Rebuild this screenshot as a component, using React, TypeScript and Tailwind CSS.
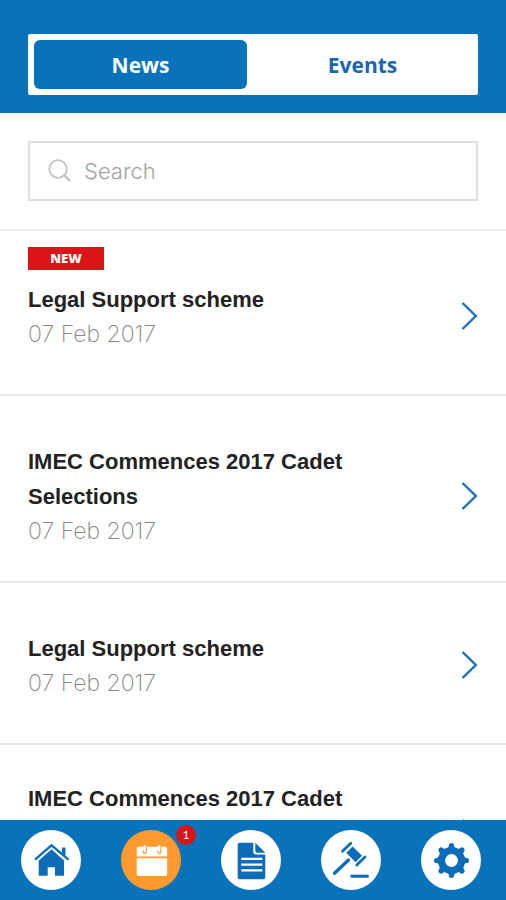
import React from 'react'
import clsx from 'clsx'

const articles = [
  { id: 1, title: 'Legal Support scheme', date: '07 Feb 2017', isNew: true, spacing: 'pt-4 pb-[42px]' },
  { id: 2, title: 'IMEC Commences 2017 Cadet Selections', date: '07 Feb 2017', isNew: false, spacing: 'pt-12 pb-8' },
  { id: 3, title: 'Legal Support scheme', date: '07 Feb 2017', isNew: false, spacing: 'pt-12 pb-[42px]' },
  { id: 4, title: 'IMEC Commences 2017 Cadet Selections', date: '07 Feb 2017', isNew: false, spacing: 'pt-9 pb-8' },
]

const navItems = [
  { id: 'home', label: 'Home', icon: <HomeIcon />, count: 0 },
  { id: 'news', label: 'News and events', icon: <CalendarIcon />, count: 1 },
  { id: 'documents', label: 'Documents', icon: <DocumentIcon />, count: 0 },
  { id: 'legal', label: 'Legal', icon: <GavelIcon />, count: 0 },
  { id: 'settings', label: 'Settings', icon: <GearIcon />, count: 0 },
]

const tabs = [
  { name: 'News', width: 'w-[48%]' },
  { name: 'Events', width: 'flex-1' },
]

export default function App() {
  const [tab, setTab] = React.useState('News')
  const [query, setQuery] = React.useState('')

  const visible = articles.filter((a) => a.title.toLowerCase().includes(query.toLowerCase()))

  function renderTabs() {
    return (
      <header className="bg-[#0872ba] px-7 pt-[34px] pb-[18px]">
        <div role="tablist" className="flex rounded-xs bg-white py-[6px] pl-[6px]">
          {tabs.map(({ name, width }) => (
            <button
              key={name}
              type="button"
              role="tab"
              aria-selected={tab === name}
              onClick={() => setTab(name)}
              className={clsx(
                "h-[49px] rounded-md pt-[2px] font-['Open_Sans',sans-serif] text-[21px] font-bold",
                width,
                tab === name ? 'bg-[#0872ba] text-white' : 'text-[#1a67b0]'
              )}
            >
              {name}
            </button>
          ))}
        </div>
      </header>
    )
  }

  function renderSearch() {
    return (
      <div className="border-b-2 border-[#ececec] p-7">
        <label className="flex h-[60px] items-center gap-3 border-2 border-[#dedede] px-[18px]">
          <SearchIcon />
          <input
            type="text"
            aria-label="Search"
            placeholder="Search"
            value={query}
            onChange={(e) => setQuery(e.target.value)}
            className="min-w-0 flex-1 font-['Inter','Liberation_Sans',sans-serif] text-[22px] font-light text-neutral-700 outline-none placeholder:text-[#a3a3a3]"
          />
        </label>
      </div>
    )
  }

  return (
    <div className="flex h-screen flex-col bg-white font-['Liberation_Sans',Arial,sans-serif]">
      {renderTabs()}
      <main className="min-h-0 flex-1 overflow-y-auto [scrollbar-width:none]">
        {renderSearch()}
        <ul>
          {visible.map((a) => (
            <Article key={a.id} {...a} />
          ))}
        </ul>
      </main>
      <BottomNav />
    </div>
  )
}

function Article(props) {
  return (
    <li className={clsx('border-b-2 border-[#e9e9e9] px-7', props.spacing)}>
      {props.isNew && (
        <span className="mb-3 flex h-[23px] w-[76px] items-center justify-center bg-[#dc1418] font-['Open_Sans',sans-serif] text-[13px] font-extrabold text-white">
          NEW
        </span>
      )}
      <a href="#article" className="flex items-center justify-between">
        <div className="max-w-[340px]">
          <h2 className="text-[22px] leading-[35px] font-bold text-[#222]">{props.title}</h2>
          <p className="font-['Inter','Liberation_Sans',sans-serif] text-[23px] leading-[35px] font-extralight text-[#858585]">
            {props.date}
          </p>
        </div>
        <svg viewBox="0 0 18 30" className="mb-[2px] h-[30px] w-[18px]" fill="none" stroke="#1a6fb8" strokeWidth="2.400">
          <path d="M2.500 2 15.800 15 2.500 28" />
        </svg>
      </a>
    </li>
  )
}

function BottomNav() {
  return (
    <nav className="flex h-20 shrink-0 items-center justify-between bg-[#0872ba] pr-[25px] pl-[21px]">
      {navItems.map((item) => (
        <button
          key={item.id}
          type="button"
          aria-label={item.label}
          className={clsx(
            'relative size-[60px] rounded-full',
            item.id === 'news' ? 'bg-[#ff9a2e] text-white' : 'bg-white text-[#0d6cb8]'
          )}
        >
          {item.icon}
          {item.count > 0 && (
            <span className="absolute -top-[5px] -right-[15px] flex size-5 items-center justify-center rounded-full bg-[#dc1418] font-['Lato',sans-serif] text-xs text-white">
              {item.count}
            </span>
          )}
        </button>
      ))}
    </nav>
  )
}

function SearchIcon() {
  return (
    <svg viewBox="0 0 24 24" className="size-6" fill="none" stroke="#c2c2c2" strokeWidth="1.800">
      <circle cx="10" cy="10" r="8.800" />
      <path d="M16.500 16.500l5.500 5.500" strokeWidth="2.400" />
    </svg>
  )
}

function HomeIcon() {
  return (
    <svg viewBox="0 0 60 60" className="size-full" fill="currentColor">
      <path d="M30.500 19.200 43 30.500V45.700H34V37.300H26.700V45.700H17.700V30.500Z" />
      <path d="M41 17.500H44.500V26L41 23Z" />
      <path d="M14 29.700 30.500 15.300 47.500 29.700" fill="none" stroke="currentColor" strokeWidth="2.400" />
    </svg>
  )
}

function CalendarIcon() {
  return (
    <svg viewBox="0 0 60 60" className="size-full" fill="currentColor">
      <path d="M17.700 16.700H44.200a2 2 0 0 1 2 2V26.600H15.700V18.700a2 2 0 0 1 2-2Z" />
      <path d="M15.700 28.200H46.200V44a2 2 0 0 1-2 2H17.700a2 2 0 0 1-2-2Z" />
      <g fill="none" stroke="#ff9a2e" strokeWidth="1.200">
        <path d="M25.200 17v3.800a1.700 1.700 0 1 1-2.600-.4M39.800 17v3.800a1.700 1.700 0 1 1-2.600-.4" />
      </g>
      <path d="M22.800 15h1.800v5.500h-1.800ZM37.400 15h1.800v5.500h-1.800Z" />
    </svg>
  )
}

function DocumentIcon() {
  return (
    <svg viewBox="0 0 60 60" className="size-full" fill="currentColor">
      <path d="M18.700 12.700H32.300V21.500a3 3 0 0 0 3 3H44.300V47.300a2 2 0 0 1-2 2H18.700a2 2 0 0 1-2-2V14.700a2 2 0 0 1 2-2Z" />
      <path d="M34.300 12.700 44.300 22.700H36.300a2 2 0 0 1-2-2Z" />
      <path d="M20.300 28.900H41.300M20.300 34.600H41.300M20.300 40.400H41.300" stroke="white" strokeWidth="2.200" />
    </svg>
  )
}

function GavelIcon() {
  return (
    <svg viewBox="0 0 60 60" className="size-full" fill="none" stroke="currentColor">
      <path d="M13.500 43.200 27.500 30" strokeWidth="3.400" strokeLinecap="round" />
      <path d="M21.500 21.300 29.800 13.300M35.800 35 44 26.900" strokeWidth="2.800" strokeLinecap="round" />
      <path d="M25.200 22.800 31.600 16.400 41 25.800 34.600 32.200Z" fill="currentColor" stroke="none" />
      <path d="M29.500 46.200H47.700" strokeWidth="3" />
    </svg>
  )
}

function GearIcon() {
  return (
    <svg viewBox="0 0 60 60" className="size-full" fill="currentColor">
      <circle cx="30.500" cy="30.500" r="10" fill="none" stroke="currentColor" strokeWidth="7.200" />
      {[0, 45, 90, 135, 180, 225, 270, 315].map((angle) => (
        <path
          key={angle}
          d="M25.500 19Q27.900 17.500 27.900 15.500a2.600 2.500 0 0 1 5.200 0Q33.100 17.500 35.500 19Z"
          transform={`rotate(${angle} 30.500 30.500)`}
        />
      ))}
    </svg>
  )
}
